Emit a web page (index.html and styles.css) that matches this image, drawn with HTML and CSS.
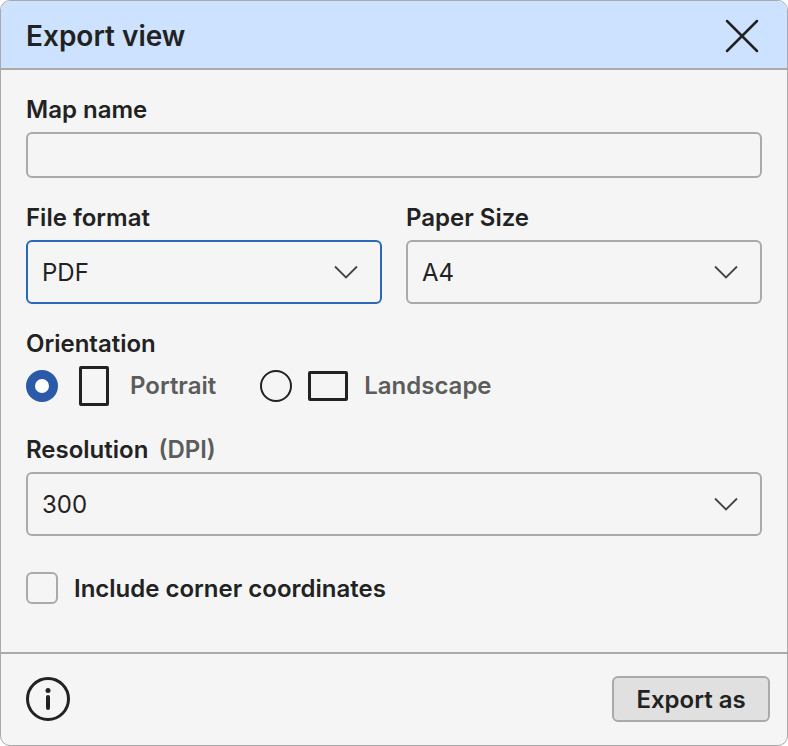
FILE: index.html
```html
<!DOCTYPE html>
<html lang="en">
<head>
<meta charset="UTF-8">
<title>Export view</title>
<link rel="stylesheet" href="styles.css">
</head>
<body>

<div class="dialog">
    <div class="header">
        <h1>Export view</h1>
        <svg class="close" width="36" height="36" viewBox="0 0 36 36"><path d="M3 3L33 33M33 3L3 33"/></svg>
    </div>

    <div class="content">
        <div class="field field-name">
            <label>Map name</label>
            <div class="input"></div>
        </div>

        <div class="row">
            <div class="field">
                <label>File format</label>
                <div class="select focused">
                    <span>PDF</span>
                    <svg class="chevron" width="26" height="14" viewBox="0 0 26 14"><path d="M2 1.5L13 12.5L24 1.5"/></svg>
                </div>
            </div>
            <div class="field">
                <label>Paper Size</label>
                <div class="select">
                    <span>A4</span>
                    <svg class="chevron" width="26" height="14" viewBox="0 0 26 14"><path d="M2 1.5L13 12.5L24 1.5"/></svg>
                </div>
            </div>
        </div>

        <div class="orientation">
            <label>Orientation</label>
            <div class="options">
                <div class="option option-portrait">
                    <span class="radio checked"></span>
                    <span class="shape portrait"></span>
                    <span class="option-label">Portrait</span>
                </div>
                <div class="option">
                    <span class="radio"></span>
                    <span class="shape landscape"></span>
                    <span class="option-label">Landscape</span>
                </div>
            </div>
        </div>

        <div class="field field-resolution">
            <label>Resolution <span class="unit">(DPI)</span></label>
            <div class="select">
                <span>300</span>
                <svg class="chevron" width="26" height="14" viewBox="0 0 26 14"><path d="M2 1.5L13 12.5L24 1.5"/></svg>
            </div>
        </div>

        <div class="check-row">
            <span class="checkbox"></span>
            <span class="check-label">Include corner coordinates</span>
        </div>
    </div>

    <div class="footer">
        <svg class="info" width="44" height="44" viewBox="0 0 44 44">
            <circle cx="22" cy="22" r="20.5"/>
            <circle class="dot" cx="22" cy="13.5" r="2.5"/>
            <path d="M22 20V31"/>
        </svg>
        <button class="export">Export as</button>
    </div>
</div>

</body>
</html>
```

FILE: styles.css
```css
/* Export dialog */
* {
    box-sizing: border-box;
}

body {
    margin: 0;
    background-color: #fff;
    font-family: Inter, "Liberation Sans", sans-serif;
    color: #222;
}

.dialog {
    width: 788px;
    height: 746px;
    display: flex;
    flex-direction: column;
    background-color: #f5f5f5;
    border: 1px solid #aaa;
    border-radius: 10px;
    overflow: hidden;
}

.header {
    height: 69px;
    flex-shrink: 0;
    display: flex;
    align-items: center;
    justify-content: space-between;
    padding: 2px 27px 0 25px;
    background-color: #cce2ff;
    border-bottom: 2px solid #aaa;
}

.header h1 {
    margin: 0;
    font-size: 28px;
    font-weight: 600;
}

.close path {
    fill: none;
    stroke: #222;
    stroke-width: 2.5;
    stroke-linecap: round;
}

.content {
    flex: 1;
    padding: 26px 25px 0;
}

label {
    display: block;
    font-size: 24px;
    line-height: 28px;
    font-weight: 600;
}

.input {
    height: 46px;
    margin-top: 8px;
    border: 2px solid #aaa;
    border-radius: 6px;
}

.row {
    display: grid;
    grid-template-columns: 356px 356px;
    gap: 24px;
    margin-top: 26px;
}

.select {
    height: 64px;
    margin-top: 8px;
    display: flex;
    align-items: center;
    justify-content: space-between;
    padding: 0 21px 0 14px;
    border: 2px solid #aaa;
    border-radius: 6px;
    font-size: 24px;
}

.select.focused {
    border-color: #2b68b8;
}

.chevron path {
    fill: none;
    stroke: #444;
    stroke-width: 1.8;
}

.orientation {
    margin-top: 26px;
}

.options {
    display: flex;
    align-items: center;
    height: 44px;
    margin-top: 6px;
}

.option {
    display: flex;
    align-items: center;
}

.option-portrait {
    margin-right: 44px;
}

.radio {
    width: 32px;
    height: 32px;
    border: 2px solid #222;
    border-radius: 50%;
}

.radio.checked {
    border: 9px solid #2b5aa8;
    background-color: #fff;
}

.shape {
    border: 3px solid #222;
    border-radius: 2px;
    margin-left: 21px;
}

.shape.portrait {
    width: 30px;
    height: 40px;
}

.shape.landscape {
    width: 40px;
    height: 30px;
    margin-left: 16px;
}

.option-label {
    margin-left: 16px;
    margin-bottom: 2px;
    font-size: 24px;
    font-weight: 600;
    color: #5c5c5c;
}

.option-portrait .option-label {
    margin-left: 21px;
}

.field-resolution {
    margin-top: 28px;
}

.unit {
    color: #5c5c5c;
    margin-left: 4px;
}

.check-row {
    display: flex;
    align-items: center;
    margin-top: 36px;
}

.checkbox {
    width: 32px;
    height: 32px;
    border: 2px solid #aaa;
    border-radius: 6px;
}

.check-label {
    margin-left: 16px;
    font-size: 24px;
    font-weight: 600;
}

.footer {
    height: 93px;
    flex-shrink: 0;
    display: flex;
    align-items: center;
    justify-content: space-between;
    padding: 0 17px 1px 25px;
    border-top: 2px solid #aaa;
}

.info {
    margin-top: -1px;
}

.info circle {
    fill: none;
    stroke: #222;
    stroke-width: 3;
}

.info .dot {
    fill: #222;
    stroke: none;
}

.info path {
    stroke: #222;
    stroke-width: 4;
    stroke-linecap: round;
}

.export {
    width: 158px;
    height: 46px;
    padding: 0;
    background-color: #e0e0e0;
    border: 2px solid #aaa;
    border-radius: 6px;
    font-family: inherit;
    font-size: 24px;
    font-weight: 600;
    color: #222;
}
```
